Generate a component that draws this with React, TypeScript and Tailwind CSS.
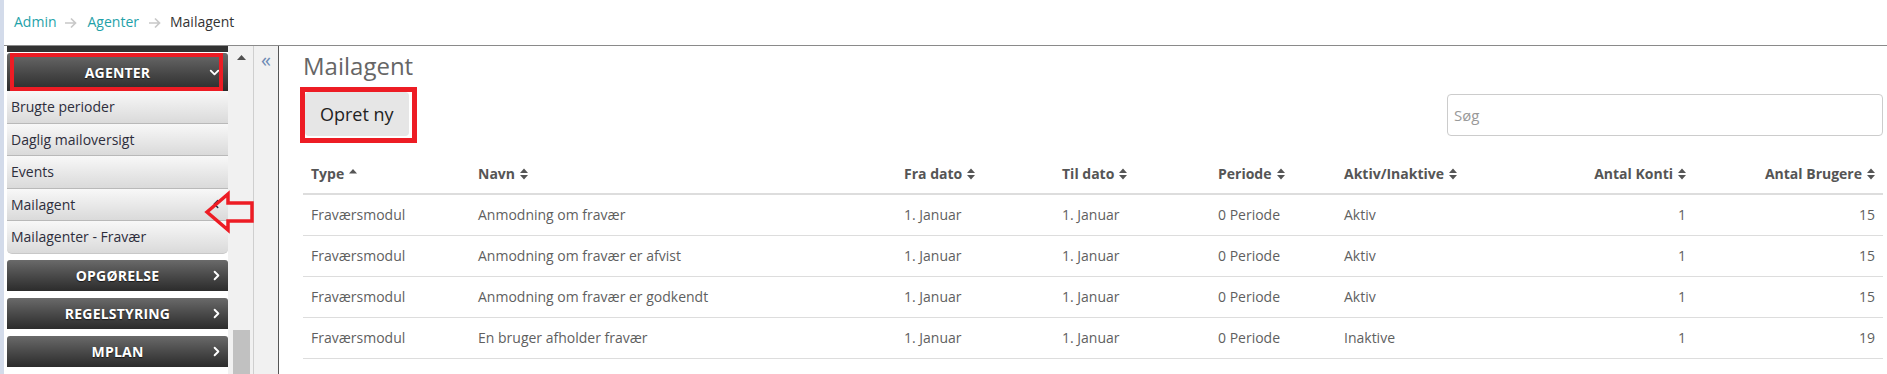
import React from "react";
import { ChevronRight, ChevronDown, ChevronLeft } from "lucide-react";

const rows = [
  ["Fraværsmodul", "Anmodning om fravær", "1. Januar", "1. Januar", "0 Periode", "Aktiv", "1", "15"],
  ["Fraværsmodul", "Anmodning om fravær er afvist", "1. Januar", "1. Januar", "0 Periode", "Aktiv", "1", "15"],
  ["Fraværsmodul", "Anmodning om fravær er godkendt", "1. Januar", "1. Januar", "0 Periode", "Aktiv", "1", "15"],
  ["Fraværsmodul", "En bruger afholder fravær", "1. Januar", "1. Januar", "0 Periode", "Inaktive", "1", "19"],
];

function SortIcon({ asc }: { asc?: boolean }) {
  return (
    <svg width="8" height="12" viewBox="0 0 8 12" className="inline-block ml-[5px] align-[-1px]">
      {asc ? (
        <path d="M4 1 L8 5.5 H0 Z" fill="#555" />
      ) : (
        <path d="M4 0.5 L8 5 H0 Z M4 11.5 L0 7 H8 Z" fill="#555" />
      )}
    </svg>
  );
}

function Arrow() {
  return (
    <svg width="13" height="12" viewBox="0 0 13 12" className="block">
      <path d="M1 6 H11.5 M7 1.5 L11.5 6 L7 10.5" stroke="#c8c8c8" strokeWidth="1.7" fill="none" />
    </svg>
  );
}

function DarkItem({ label, className = "", chevron = true }: { label: string; className?: string; chevron?: boolean }) {
  return (
    <div
      className={`relative shrink-0 h-[31px] flex items-center justify-center rounded-t-[3px] bg-linear-to-b from-[#6a6a6a] to-[#2c2c2c] text-white font-bold text-[14px] tracking-[0.2px] [text-shadow:0_1px_1px_rgba(0,0,0,0.6)] ${className}`}
    >
      {label}
      {chevron && <ChevronRight size={15} strokeWidth={3} className="absolute right-[4px] text-white" />}
    </div>
  );
}

function LightItem({ label, last, icon }: { label: string; last?: boolean; icon?: boolean }) {
  return (
    <div
      className={`relative shrink-0 h-[32.5px] flex items-center pl-[4px] bg-linear-to-b from-[#f8f8f8] to-[#dadada] border-b border-[#b9b9b9] text-[14px] text-[#2e2e3c] ${
        last ? "rounded-b-[5px] border-[#c8c8c8]" : ""
      }`}
    >
      {label}
      {icon && <ChevronLeft size={14} strokeWidth={2.5} className="absolute right-[5px] text-[#1d2b44]" />}
    </div>
  );
}

export default function App() {
  return (
    <div className="relative flex h-[374px] w-full overflow-hidden bg-white font-['Open_Sans',sans-serif]">
      <div className="w-[4px] shrink-0 bg-[#d3dbea]" />
      <div className="flex flex-1 flex-col min-w-0">
        {/* Breadcrumb */}
        <div className="h-[46px] shrink-0 border-b border-[#8a8a8a] pt-[12px] pl-[10px] flex items-start text-[14px] leading-[20px]">
          <span className="text-[#1fa2a9]">Admin</span>
          <span className="ml-[7px] mr-[11px] mt-[5px]"><Arrow /></span>
          <span className="text-[#1fa2a9]">Agenter</span>
          <span className="ml-[9px] mr-[9px] mt-[5px]"><Arrow /></span>
          <span className="text-[#333]">Mailagent</span>
        </div>

        <div className="flex flex-1 min-h-0">
          {/* Sidebar menu */}
          <div className="w-[224px] shrink-0 pl-[3px] bg-white flex flex-col overflow-hidden">
            <div className="shrink-0 h-[6px] bg-[#323232]" />
            <div className="relative shrink-0 mt-[1px] h-[38px] flex items-center justify-center rounded-t-[3px] bg-linear-to-b from-[#6a6a6a] to-[#2c2c2c] text-white font-bold text-[14px] tracking-[0.2px] [text-shadow:0_1px_1px_rgba(0,0,0,0.6)]">
              AGENTER
              <ChevronDown size={15} strokeWidth={3} className="absolute right-[6px] text-white" />
              <div className="absolute left-[3px] right-[5px] top-0 bottom-0 border-[4px] border-[#ed1c24]" />
            </div>
            <LightItem label="Brugte perioder" />
            <LightItem label="Daglig mailoversigt" />
            <LightItem label="Events" />
            <LightItem label="Mailagent" icon />
            <LightItem label="Mailagenter - Fravær" last />
            <DarkItem label="OPGØRELSE" className="mt-[6px]" />
            <DarkItem label="REGELSTYRING" className="mt-[7px]" />
            <DarkItem label="MPLAN" className="mt-[7px]" />
            <DarkItem label="" chevron={false} className="mt-[7px]" />
          </div>

          {/* Scrollbar */}
          <div className="w-[26px] shrink-0 bg-[#f1f1f1] border-r border-[#cfcfcf] flex flex-col items-center">
            <svg width="9" height="6" viewBox="0 0 9 6" className="mt-[9px] ml-[2px]">
              <path d="M4.5 0 L9 5 H0 Z" fill="#505050" />
            </svg>
            <div className="flex-1" />
            <div className="h-[44px] w-[17px] ml-[1px] bg-[#c1c1c1]" />
          </div>

          {/* Collapse column */}
          <div className="w-[25px] shrink-0 bg-[#f1f1f1] border-r border-[#555] flex justify-center">
            <span className="text-[20px] leading-[20px] mt-[4px] text-[#6c8ab4]">«</span>
          </div>

          {/* Main */}
          <div className="flex-1 min-w-0 pl-[24px] pr-[4px] pt-[4px]">
            <h1 className="text-[24px] leading-[32px] font-normal text-[#666]">Mailagent</h1>
            <div className="mt-[5px] flex items-center justify-between">
              <div className="border-[5px] border-[#ed1c24] pr-[3px] pb-[2px] -ml-[3px]">
                <button className="h-[44px] px-[15px] rounded-[4px] bg-[#e6e6e6] text-[18px] text-[#222]">
                  Opret ny
                </button>
              </div>
              <input
                placeholder="Søg"
                className="w-[436px] h-[42px] border border-[#cccccc] rounded-[4px] px-[6px] text-[15px] placeholder:text-[#999] outline-none"
              />
            </div>

            <table className="mt-[10px] w-full table-fixed border-collapse text-[14px]">
              <colgroup>
                <col className="w-[167px]" />
                <col className="w-[426px]" />
                <col className="w-[158px]" />
                <col className="w-[156px]" />
                <col className="w-[126px]" />
                <col className="w-[200px]" />
                <col className="w-[158px]" />
                <col />
              </colgroup>
              <thead>
                <tr className="h-[41px] border-b-2 border-[#dddddd] text-[#555] font-bold">
                  <th className="px-[8px] text-left font-bold">Type<SortIcon asc /></th>
                  <th className="px-[8px] text-left font-bold">Navn<SortIcon /></th>
                  <th className="px-[8px] text-left font-bold">Fra dato<SortIcon /></th>
                  <th className="px-[8px] text-left font-bold">Til dato<SortIcon /></th>
                  <th className="px-[8px] text-left font-bold">Periode<SortIcon /></th>
                  <th className="px-[8px] text-left font-bold">Aktiv/Inaktive<SortIcon /></th>
                  <th className="px-[8px] text-right font-bold">Antal Konti<SortIcon /></th>
                  <th className="px-[8px] text-right font-bold">Antal Brugere<SortIcon /></th>
                </tr>
              </thead>
              <tbody>
                {rows.map((r, i) => (
                  <tr key={i} className="h-[41px] border-b border-[#dddddd] text-[#5f5f5f]">
                    {r.map((c, j) => (
                      <td key={j} className={`px-[8px] ${j >= 6 ? "text-right" : "text-left"}`}>
                        {c}
                      </td>
                    ))}
                  </tr>
                ))}
              </tbody>
            </table>
          </div>
        </div>
      </div>

      {/* Red annotation arrow */}
      <svg width="60" height="50" viewBox="0 0 60 50" className="absolute left-[200px] top-[188px]">
        <path
          d="M7 24 L28 6 L28 15 L52 15 L52 33 L28 33 L28 42 Z"
          fill="none"
          stroke="#ed1c24"
          strokeWidth="3.5"
          strokeLinejoin="miter"
        />
      </svg>
    </div>
  );
}
